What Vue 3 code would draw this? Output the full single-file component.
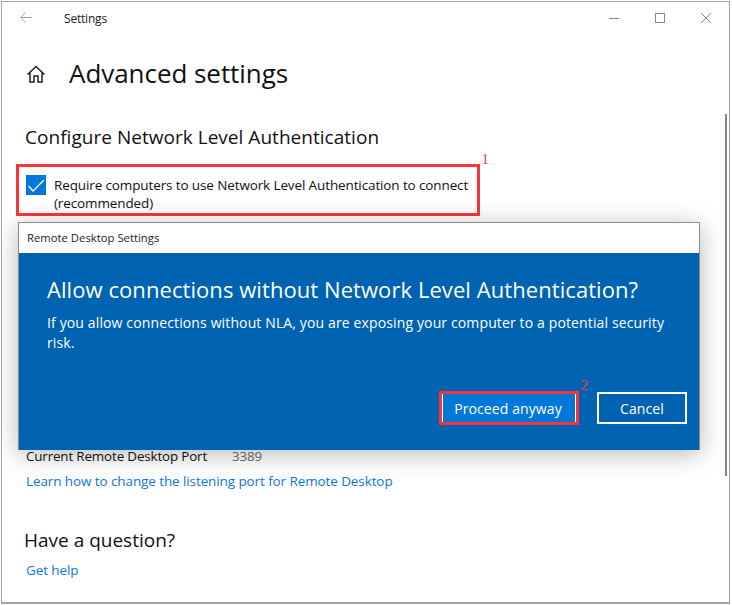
<script setup>
</script>

<template>
  <div class="window">
    <header class="titlebar">
      <svg class="back" width="12" height="11" viewBox="0 0 12 11"><path d="M5.500 .5 .8 5.500l4.700 5M.8 5.500H12" fill="none" stroke="#a0a0a0" stroke-width="1"/></svg>
      <span class="app-name">Settings</span>
      <div class="controls">
        <svg width="12" height="12" viewBox="0 0 12 12"><path d="M1 6.500H11" stroke="#8a8a8a" stroke-width="1"/></svg>
        <svg width="12" height="12" viewBox="0 0 12 12"><rect x="1.500" y="1.500" width="9" height="9" fill="none" stroke="#8a8a8a"/></svg>
        <svg width="12" height="12" viewBox="0 0 12 12"><path d="M1 1 11 11M11 1 1 11" stroke="#8a8a8a" stroke-width="1"/></svg>
      </div>
    </header>
    <main class="content">
      <div class="page-title">
        <svg class="home" width="20" height="18" viewBox="0 0 20 18"><path d="M1.500 9.500 10 1.500l8.500 8M4 7.500V17h4v-6h4v6h4V7.500" fill="none" stroke="#222" stroke-width="1.500"/></svg>
        <h1>Advanced settings</h1>
      </div>
      <h2>Configure Network Level Authentication</h2>
      <div class="nla-wrap">
        <div class="nla">
          <span class="checkbox"><svg width="20" height="20" viewBox="0 0 20 20"><path d="M2.500 11 7 16 18 5" fill="none" stroke="#fff" stroke-width="1.300"/></svg></span>
          <span class="nla-text">Require computers to use Network Level Authentication to connect<br>(recommended)</span>
        </div>
        <span class="mark mark-one">1</span>
      </div>
      <div class="port-row"><span>Current Remote Desktop Port</span><span class="port">3389</span></div>
      <a class="link port-link">Learn how to change the listening port for Remote Desktop</a>
      <h3>Have a question?</h3>
      <a class="link">Get help</a>
    </main>
    <div class="scrollbar"></div>

    <section class="dialog">
      <div class="dialog-title">Remote Desktop Settings</div>
      <div class="dialog-body">
        <h4>Allow connections without Network Level Authentication?</h4>
        <p>If you allow connections without NLA, you are exposing your computer to a potential security risk.</p>
        <div class="actions">
          <div class="proceed-wrap">
            <button class="btn primary">Proceed anyway</button>
            <span class="mark mark-two">2</span>
          </div>
          <button class="btn">Cancel</button>
        </div>
      </div>
    </section>
  </div>
</template>

<style>
html, body { margin: 0; background: #fff; }
</style>

<style scoped>
.window {
  position: relative;
  box-sizing: border-box;
  width: 729px;
  height: 603px;
  margin: 1px 0 0 1px;
  border: 1px solid #a3a3a3;
  border-bottom-width: 2px;
  background: #fff;
  color: #111;
  font-family: "Open Sans", "Noto Sans", sans-serif;
  overflow: hidden;
}
.titlebar {
  display: flex;
  align-items: center;
  height: 32px;
}
.back { margin-left: 18px; margin-top: -1px; }
.app-name { margin-left: 32px; font-size: 12px; letter-spacing: -0.2px; margin-top: 0; color: #222; }
.controls {
  display: flex;
  gap: 34px;
  margin-left: auto;
  margin-right: 17px;
  margin-top: 0;
}
.content { padding-left: 23px; }
.page-title { display: flex; align-items: center; margin-top: 11px; height: 56px; }
.home { margin-left: 1px; margin-top: 2px; }
h1 { margin: 0 0 0 23px; font-size: 26px; font-weight: 400; line-height: 36px; letter-spacing: -0.050px; color: #111; }
h2 { margin: 22px 0 0 0; font-size: 19px; font-weight: 400; line-height: 28px; letter-spacing: 0.030px; }
.nla-wrap { position: relative; margin: 13px 0 0 -9px; width: 464px; }
.nla {
  box-sizing: border-box;
  display: flex;
  gap: 8px;
  height: 52px;
  padding: 8px 0 0 7px;
  border: 3px solid #f7363b;
}
.checkbox { flex: none; width: 20px; height: 20px; background: #0078d7; }
.checkbox svg { display: block; }
.nla-text { font-size: 13.500px; line-height: 18px; letter-spacing: -0.120px; white-space: nowrap; margin-top: 1px; }
.mark { position: absolute; font-family: "Liberation Serif", serif; font-size: 15px; color: #f7363b; }
.mark-one { right: -9px; top: -13px; }
.port-row { display: flex; margin-top: 230px; font-size: 13.400px; letter-spacing: -0.150px; line-height: 20px; margin-left: 1px; }
.port { margin-left: 25px; color: #6b6b6b; }
.link { display: block; color: #0f78d4; font-size: 13.500px; letter-spacing: -0.100px; line-height: 20px; margin-left: 1px; }
.port-link { margin-top: 5px; }
h3 { margin: 36px 0 0 -1px; font-size: 19px; font-weight: 400; line-height: 26px; }
h3 + .link { margin-top: 7px; }
.scrollbar { position: absolute; left: 723px; top: 112px; width: 2px; height: 362px; background: #858585; }
.dialog {
  position: absolute;
  left: 16px;
  top: 220px;
  width: 682px;
  height: 228px;
  box-sizing: border-box;
  border: 1px solid #8d8d8d;
  border-bottom: 0;
  background: #fff;
  box-shadow: 0 4px 24px rgba(0,0,0,.28);
  display: flex;
  flex-direction: column;
}
.dialog-title { flex: none; height: 30px; line-height: 29px; padding-left: 8px; font-size: 11.300px; color: #222; }
.dialog-body { flex: 1; background: #0063b1; color: #fff; padding: 18px 12px 0 28px; display: flex; flex-direction: column; }
h4 { margin: 0; font-size: 22px; font-weight: 400; line-height: 36px; letter-spacing: 0.070px; white-space: nowrap; }
p { margin: 6px 0 0; font-size: 14px; line-height: 20px; letter-spacing: 0.130px; width: 630px; }
.actions { display: flex; justify-content: flex-end; align-items: center; gap: 18px; margin-top: 38px; }
.proceed-wrap { position: relative; }
.btn {
  box-sizing: border-box;
  display: block;
  width: 90px;
  height: 32px;
  background: transparent;
  border: 2px solid #fff;
  color: #fff;
  font: inherit;
  font-size: 14px;
  letter-spacing: 0.100px;
  padding: 0;
}
.btn.primary {
  width: 140px;
  height: 34px;
  padding-right: 2px;
  background: #0078d7;
  border: 3px solid #f7363b;
  box-shadow: inset 1px 0 #fff, inset -1px 0 #fff;
}
.mark-two { right: -9px; top: -14px; }
</style>
